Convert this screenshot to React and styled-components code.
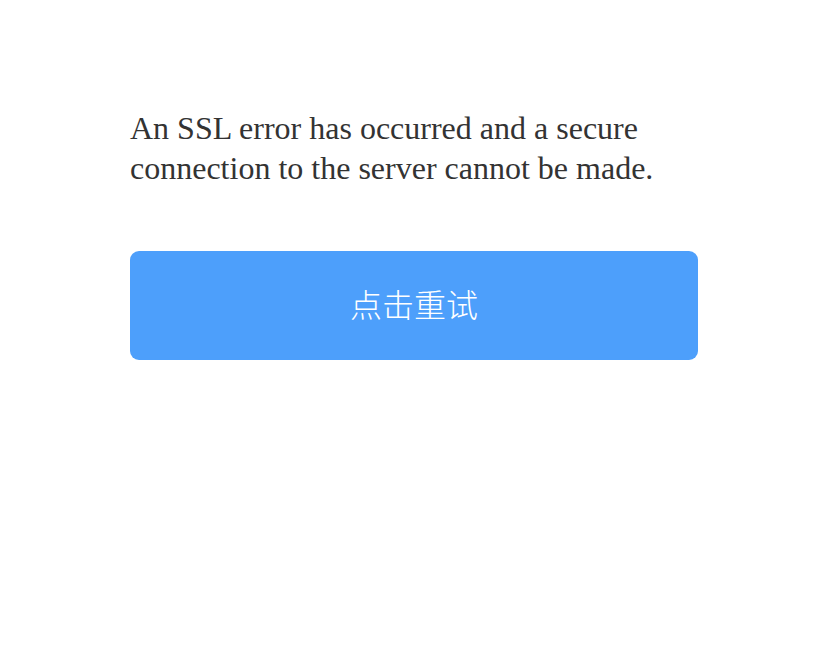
import React from 'react';
import styled, { createGlobalStyle } from 'styled-components';

const GlobalStyle = createGlobalStyle`
  html, body {
    margin: 0;
    padding: 0;
    background: #ffffff;
  }
`;

const Page = styled.div`
  width: 828px;
  height: 655px;
  box-sizing: border-box;
  padding: 108px 130px 0 130px;
  display: flex;
  flex-direction: column;
`;

const Message = styled.p`
  margin: 0;
  font-family: "Liberation Serif", "Times New Roman", serif;
  font-size: 32px;
  line-height: 40px;
  color: #333333;
  width: 568px;
`;

const RetryButton = styled.button`
  margin-top: 63px;
  width: 568px;
  height: 109px;
  border: none;
  border-radius: 9px;
  background: #4d9ffb;
  color: #ffffff;
  font-family: "Noto Sans CJK SC", "Noto Sans", sans-serif;
  font-weight: 300;
  font-size: 32px;
  cursor: pointer;
  display: flex;
  align-items: center;
  justify-content: center;
  padding: 0 0 5px 0;
`;

export default function App() {
  return (
    <>
      <GlobalStyle />
      <Page>
        <Message>
          An SSL error has occurred and a secure connection to the server cannot be made.
        </Message>
        <RetryButton>点击重试</RetryButton>
      </Page>
    </>
  );
}
